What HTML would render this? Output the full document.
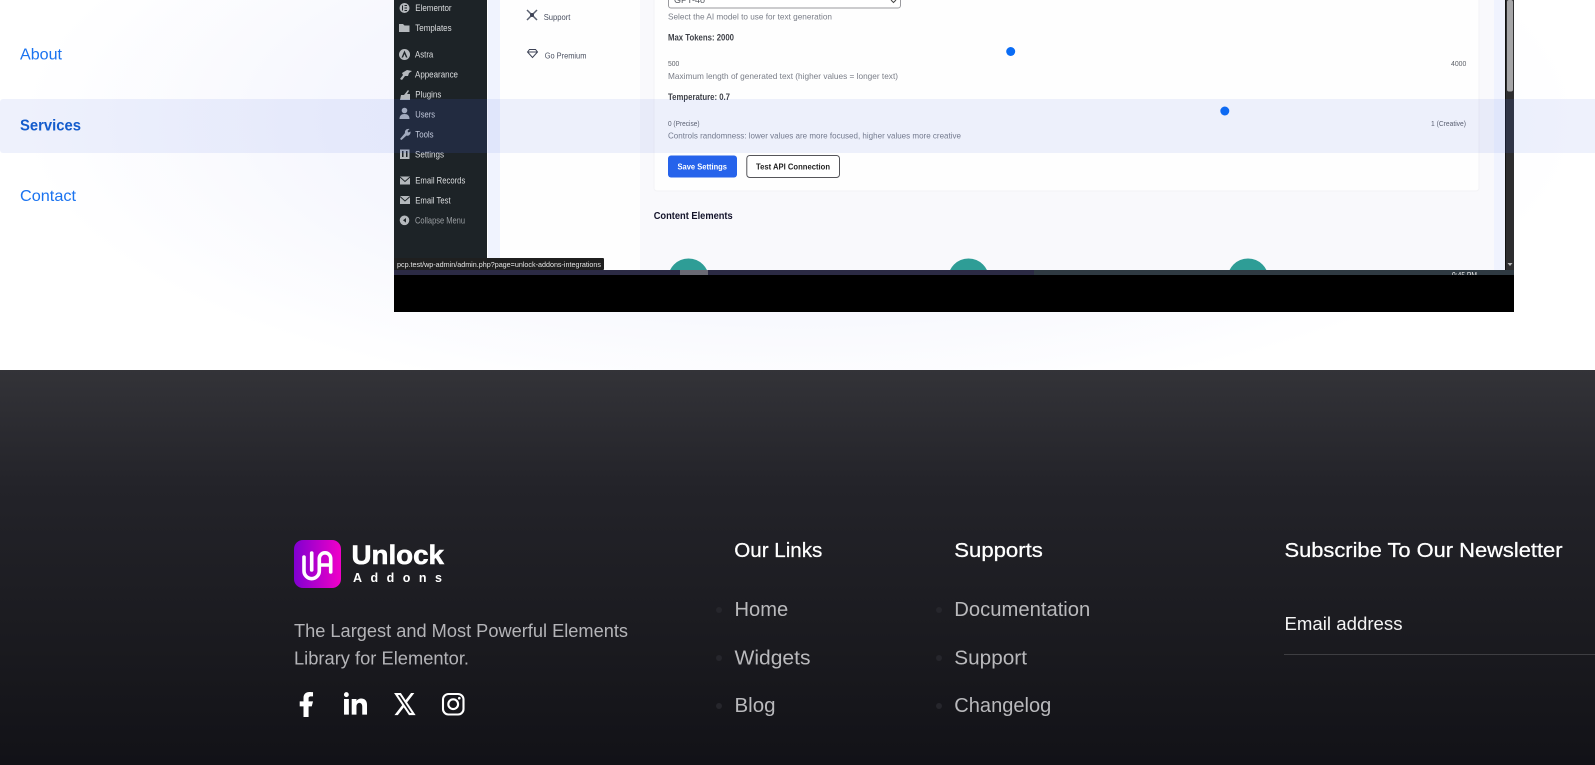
<!DOCTYPE html>
<html lang="en">
<head>
<meta charset="utf-8">
<title>Unlock Addons</title>
<style>
html,body{margin:0;padding:0;width:1595px;height:765px;overflow:hidden;background:#fff}
svg{display:block;position:absolute;left:0;top:0}
text{font-family:"Liberation Sans",sans-serif}
</style>
</head>
<body>
<svg width="1595" height="765" viewBox="0 0 1595 765" xmlns="http://www.w3.org/2000/svg">
<defs>
<radialGradient id="bg1" gradientUnits="userSpaceOnUse" cx="800" cy="120" r="1" gradientTransform="translate(800 120) scale(780 290) translate(-800 -120)">
<stop offset="0" stop-color="#f1f3fe"/><stop offset=".6" stop-color="#f6f7fe"/><stop offset="1" stop-color="#ffffff"/>
</radialGradient>
<linearGradient id="foot" x1="0" y1="0" x2="0" y2="1">
<stop offset="0" stop-color="#333338"/><stop offset=".3" stop-color="#232329"/><stop offset=".7" stop-color="#1a1a1f"/><stop offset="1" stop-color="#121217"/>
</linearGradient>
<linearGradient id="logo" x1="0" y1="0" x2="1" y2="0">
<stop offset="0" stop-color="#8000d0"/><stop offset="1" stop-color="#f000c8"/>
</linearGradient>
<filter id="soft" x="-2%" y="-2%" width="104%" height="104%"><feGaussianBlur stdDeviation=".3"/></filter>
<filter id="glow" x="-20%" y="-20%" width="140%" height="140%"><feGaussianBlur stdDeviation=".35"/></filter>
<clipPath id="scr"><rect x="394" y="0" width="1120" height="312"/></clipPath>
<clipPath id="content"><rect x="394" y="0" width="1111" height="270"/></clipPath>
<clipPath id="strip"><rect x="394" y="270" width="1120" height="5"/></clipPath>
</defs>

<!-- page background -->
<rect width="1595" height="370" fill="#fff"/>
<rect width="1595" height="370" fill="url(#bg1)"/>

<!-- embedded screenshot -->
<g clip-path="url(#scr)">
<rect x="394" y="0" width="1120" height="312" fill="#000"/>
<g clip-path="url(#content)">
<rect x="394" y="0" width="1111" height="270" fill="#f0f3fe"/>
<rect x="500" y="0" width="994" height="270" fill="#f9f9fc"/>
<rect x="500" y="0" width="140" height="270" fill="#fefefe"/>
<rect x="394" y="0" width="93" height="270" fill="#1d2327"/>
<rect x="487" y="0" width="1" height="270" fill="#fff"/>
<rect x="654" y="-10" width="825" height="201" rx="3" fill="#fefefe" stroke="#f3f3f6"/>
<circle cx="688.500" cy="279" r="20.500" fill="#2e9d96"/>
<circle cx="968.500" cy="279" r="20.500" fill="#2e9d96"/>
<circle cx="1248" cy="279" r="20.500" fill="#2e9d96"/>
</g>

<g filter="url(#soft)">
<!-- wp sidebar icons -->
<g fill="#b4b8bc">
<circle cx="404.500" cy="8" r="5"/>
<path d="M399 24h4l1.500 1.500h5V32h-10.500z"/>
<circle cx="404.500" cy="54.500" r="5.500"/>
<path d="M400 79l3-4-1-2 5-3 5 1-3 2-1 3-3 0-3 4z"/>
<path d="M400 100l1-5 3 0 4-5 1 1-2 3 3 0 0 6z"/>
<circle cx="404.500" cy="110.500" r="2.800"/>
<path d="M399.500 119c0-3.500 2-5 5-5s5 1.500 5 5z"/>
<path d="M400 139l5-6c-.5-2 1-4.500 4.500-4l-2 2 1 1.500 2-1c.5 3-2 5-4 4l-5 4.500z"/>
<path fill-rule="evenodd" d="M400 149.500h9.500v9.500H400zM402 151v6h1.500v-6zM406 151v6h1.500v-6z"/>
<rect x="400" y="176.500" width="10" height="8"/>
<rect x="400" y="196" width="10" height="8"/>
<circle cx="404.500" cy="220.300" r="4.800"/>
</g>
<path d="M400 177l5 4.500 5-4.500M400 196.500l5 4.500 5-4.500" fill="none" stroke="#1d2327" stroke-width=".9"/>
<path d="M406 218l-3 2.300 3 2.300z" fill="#1d2327"/>
<path d="M404.500 50.500l-3 7h1.500l1.500-3.500 1.500 3.500h1.500z" fill="#1d2327"/>
<path d="M402.500 5.500v5M404.500 5.500h2.500M404.500 8h2.500M404.500 10.500h2.500" stroke="#1d2327" stroke-width="1" fill="none"/>

<g font-size="9" fill="#dcdee0">
<text x="415.300" y="11" textLength="36.300" lengthAdjust="spacingAndGlyphs">Elementor</text>
<text x="415.300" y="31" textLength="36.300" lengthAdjust="spacingAndGlyphs">Templates</text>
<text x="415" y="57.500" textLength="18.300" lengthAdjust="spacingAndGlyphs">Astra</text>
<text x="415" y="77.500" textLength="43" lengthAdjust="spacingAndGlyphs">Appearance</text>
<text x="415.300" y="97.500" textLength="26" lengthAdjust="spacingAndGlyphs">Plugins</text>
<text x="415.300" y="117.300" textLength="19.700" lengthAdjust="spacingAndGlyphs">Users</text>
<text x="415.300" y="137.300" textLength="18.300" lengthAdjust="spacingAndGlyphs">Tools</text>
<text x="415" y="157.500" textLength="29" lengthAdjust="spacingAndGlyphs">Settings</text>
<text x="415.300" y="183.700" textLength="50" lengthAdjust="spacingAndGlyphs">Email Records</text>
<text x="415.300" y="203.500" textLength="35.300" lengthAdjust="spacingAndGlyphs">Email Test</text>
<text x="415" y="223.500" textLength="50" lengthAdjust="spacingAndGlyphs" fill="#9a9ea2">Collapse Menu</text>
</g>

<!-- plugin menu -->
<path d="M527 10l10 10M537 10l-10 10" stroke="#5a6070" stroke-width="1.500" fill="none"/>
<circle cx="532" cy="15" r="2" fill="#3d4355"/>
<path d="M527.500 52l2-2.500h6l2 2.500-5 5.500zM527.500 52h10" fill="none" stroke="#3d4355" stroke-width="1"/>
<g font-size="8.500" fill="#4a5060">
<text x="543.700" y="20" textLength="26.700" lengthAdjust="spacingAndGlyphs">Support</text>
<text x="544.700" y="58.500" textLength="41.700" lengthAdjust="spacingAndGlyphs">Go Premium</text>
</g>

<!-- settings form -->
<rect x="668.500" y="-14" width="232" height="22" rx="2.500" fill="#fff" stroke="#9a9a9e"/>
<text x="674" y="3" font-size="9" fill="#55585f">GPT-4o</text>
<path d="M891 0l2.500 2.500 2.500-2.500" fill="none" stroke="#444" stroke-width="1"/>
<g font-size="8.500" fill="#7a7e88">
<text x="668" y="19.500" textLength="164" lengthAdjust="spacingAndGlyphs">Select the AI model to use for text generation</text>
<text x="668" y="79" textLength="230" lengthAdjust="spacingAndGlyphs">Maximum length of generated text (higher values = longer text)</text>
<text x="668" y="138.500" textLength="293" lengthAdjust="spacingAndGlyphs">Controls randomness: lower values are more focused, higher values more creative</text>
</g>
<g font-size="9" font-weight="700" fill="#3f4249">
<text x="668" y="40.500" textLength="66" lengthAdjust="spacingAndGlyphs">Max Tokens: 2000</text>
<text x="668" y="100" textLength="62" lengthAdjust="spacingAndGlyphs">Temperature: 0.7</text>
</g>
<g font-size="7.500" fill="#5d6068">
<text x="668" y="66" textLength="11.300" lengthAdjust="spacingAndGlyphs">500</text>
<text x="1451" y="66" textLength="15.300" lengthAdjust="spacingAndGlyphs">4000</text>
<text x="668" y="126" textLength="31.500" lengthAdjust="spacingAndGlyphs">0 (Precise)</text>
<text x="1431" y="126" textLength="35" lengthAdjust="spacingAndGlyphs">1 (Creative)</text>
</g>
<rect x="668" y="155.500" width="69" height="22" rx="3" fill="#2563eb"/>
<text x="677.500" y="169.500" font-size="8.500" font-weight="700" fill="#fff" textLength="49.500" lengthAdjust="spacingAndGlyphs">Save Settings</text>
<rect x="746.800" y="155.500" width="92.700" height="22" rx="3" fill="#fff" stroke="#55555a"/>
<text x="756" y="169.500" font-size="8.500" font-weight="700" fill="#222" textLength="74" lengthAdjust="spacingAndGlyphs">Test API Connection</text>
<text x="653.700" y="219" font-size="10" font-weight="700" fill="#12122c" textLength="79" lengthAdjust="spacingAndGlyphs">Content Elements</text>
</g>
<circle cx="1010.700" cy="51.500" r="4.500" fill="#0a6cf5"/>
<circle cx="1224.800" cy="111" r="4.500" fill="#0a6cf5"/>

<!-- scrollbar -->
<rect x="1505" y="0" width="9" height="270" fill="#2d2d2f"/>
<rect x="1505" y="0" width="1" height="270" fill="#111"/>
<rect x="1507" y="0" width="6" height="91.500" rx="2" fill="#a5a5a7"/>
<path d="M1507.500 263h5l-2.500 3z" fill="#b8b8b8"/>

<!-- taskbar strip -->
<rect x="394" y="270" width="1120" height="5" fill="#2f3a42"/>
<rect x="394" y="270" width="640" height="5" fill="#2b2a44"/>
<rect x="680" y="270" width="28" height="5" fill="#6a6a74"/>
<g clip-path="url(#strip)"><text x="1452" y="278" font-size="8" fill="#e8e8e8" textLength="25" lengthAdjust="spacingAndGlyphs">9:45 PM</text></g>

<!-- status tooltip -->
<rect x="394" y="258" width="210" height="12" rx="1" fill="#1f1f1f"/>
<text x="397" y="267" font-size="7.500" fill="#e4e4e4" textLength="204" lengthAdjust="spacingAndGlyphs" filter="url(#soft)">pcp.test/wp-admin/admin.php?page=unlock-addons-integrations</text>
</g>

<!-- nav -->
<rect x="0" y="99" width="1600" height="54" rx="3" fill="#3758de" fill-opacity=".085"/>
<rect x="394" y="99" width="93" height="54" fill="#5068c0" fill-opacity=".08"/>
<rect x="1505" y="99" width="9" height="54" fill="#5068c0" fill-opacity=".08"/>
<text x="20" y="59.700" font-size="16" fill="#1a73f0" textLength="42" lengthAdjust="spacingAndGlyphs">About</text>
<text x="20" y="130.300" font-size="16" font-weight="700" fill="#145ccc" textLength="61" lengthAdjust="spacingAndGlyphs">Services</text>
<text x="20" y="201" font-size="16" fill="#1a73f0" textLength="56" lengthAdjust="spacingAndGlyphs">Contact</text>

<!-- footer -->
<rect x="0" y="370" width="1595" height="395" fill="url(#foot)"/>

<!-- logo -->
<rect x="294" y="540" width="47" height="48" rx="9" fill="url(#logo)"/>
<g fill="none" stroke="#fff" stroke-width="3.600" stroke-linecap="round" filter="url(#glow)">
<path d="M304 557V571a7.650 7.650 0 0 0 15.300 0V558.500a5.700 5.700 0 0 1 11.400 0V572"/>
<path d="M311.700 553V570"/>
<path d="M320 565H330"/>
</g>
<text x="351.500" y="564" font-size="27" font-weight="700" fill="#fff" stroke="#fff" stroke-width=".6" textLength="92.500" lengthAdjust="spacingAndGlyphs">Unlock</text>
<text x="353" y="582" font-size="12.500" font-weight="700" fill="#fff" textLength="89">Addons</text>

<text x="294" y="637" font-size="18" fill="#b4b4b8" textLength="334" lengthAdjust="spacingAndGlyphs">The Largest and Most Powerful Elements</text>
<text x="294" y="664.300" font-size="18" fill="#b4b4b8" textLength="175" lengthAdjust="spacingAndGlyphs">Library for Elementor.</text>

<!-- social -->
<path transform="translate(290.800 689.500) scale(1.270 1.250)" fill="#fff" d="M14 13.500h2.500l1-4H14v-2c0-1.030 0-2 2-2h1.500V2.140c-.326-.043-1.557-.14-2.857-.14C11.928 2 10 3.657 10 6.700v2.800H7v4h3V22h4v-8.500z"/>
<path transform="translate(340.400 688.400) scale(1.210 1.250)" fill="#fff" d="M6.940 5a2 2 0 1 1-4-.002 2 2 0 0 1 4 .002zM7 8.480H3V21h4V8.480zm6.320 0H9.340V21h3.940v-6.570c0-3.660 4.770-4 4.770 0V21H22v-7.930c0-6.170-7.060-5.940-8.720-2.910l.04-1.680z"/>
<path transform="translate(392.800 690.500) scale(1 1.130)" fill="#fff" d="M18.244 2.250h3.308l-7.227 8.260 8.502 11.240H16.170l-5.214-6.817L4.990 21.750H1.680l7.730-8.835L1.254 2.250H8.080l4.713 6.231zm-1.161 17.520h1.833L7.084 4.126H5.117z"/>
<g fill="none" stroke="#fff" stroke-width="2.100">
<rect x="443" y="694" width="20.500" height="20.500" rx="5.500"/>
<circle cx="453.200" cy="704.200" r="4.900"/>
</g>
<circle cx="459.300" cy="698.200" r="1.300" fill="#fff"/>

<!-- footer headings -->
<g font-size="20" fill="#fff" stroke="#fff" stroke-width=".25">
<text x="734.300" y="557" textLength="88" lengthAdjust="spacingAndGlyphs">Our Links</text>
<text x="954.300" y="557" textLength="88.500" lengthAdjust="spacingAndGlyphs">Supports</text>
<text x="1284.500" y="557" textLength="278" lengthAdjust="spacingAndGlyphs">Subscribe To Our Newsletter</text>
</g>

<!-- footer links -->
<g fill="#26262c">
<circle cx="719" cy="610" r="3"/><circle cx="719" cy="658" r="3"/><circle cx="719" cy="706" r="3"/>
<circle cx="939" cy="610" r="3"/><circle cx="939" cy="658" r="3"/><circle cx="939" cy="706" r="3"/>
</g>
<g font-size="20" fill="#b9b9bc">
<text x="734.500" y="616" textLength="53.700" lengthAdjust="spacingAndGlyphs">Home</text>
<text x="734.500" y="664.300" textLength="76" lengthAdjust="spacingAndGlyphs">Widgets</text>
<text x="734.500" y="712" textLength="41" lengthAdjust="spacingAndGlyphs">Blog</text>
<text x="954.300" y="616" textLength="136" lengthAdjust="spacingAndGlyphs">Documentation</text>
<text x="954.300" y="664.300" textLength="72.700" lengthAdjust="spacingAndGlyphs">Support</text>
<text x="954.300" y="712" textLength="97" lengthAdjust="spacingAndGlyphs">Changelog</text>
</g>

<!-- newsletter -->
<text x="1284.500" y="630" font-size="18" fill="#f4f4f4" textLength="118" lengthAdjust="spacingAndGlyphs">Email address</text>
<rect x="1284" y="654" width="311" height="1" fill="#3e3e42"/>
</svg>
</body>
</html>
